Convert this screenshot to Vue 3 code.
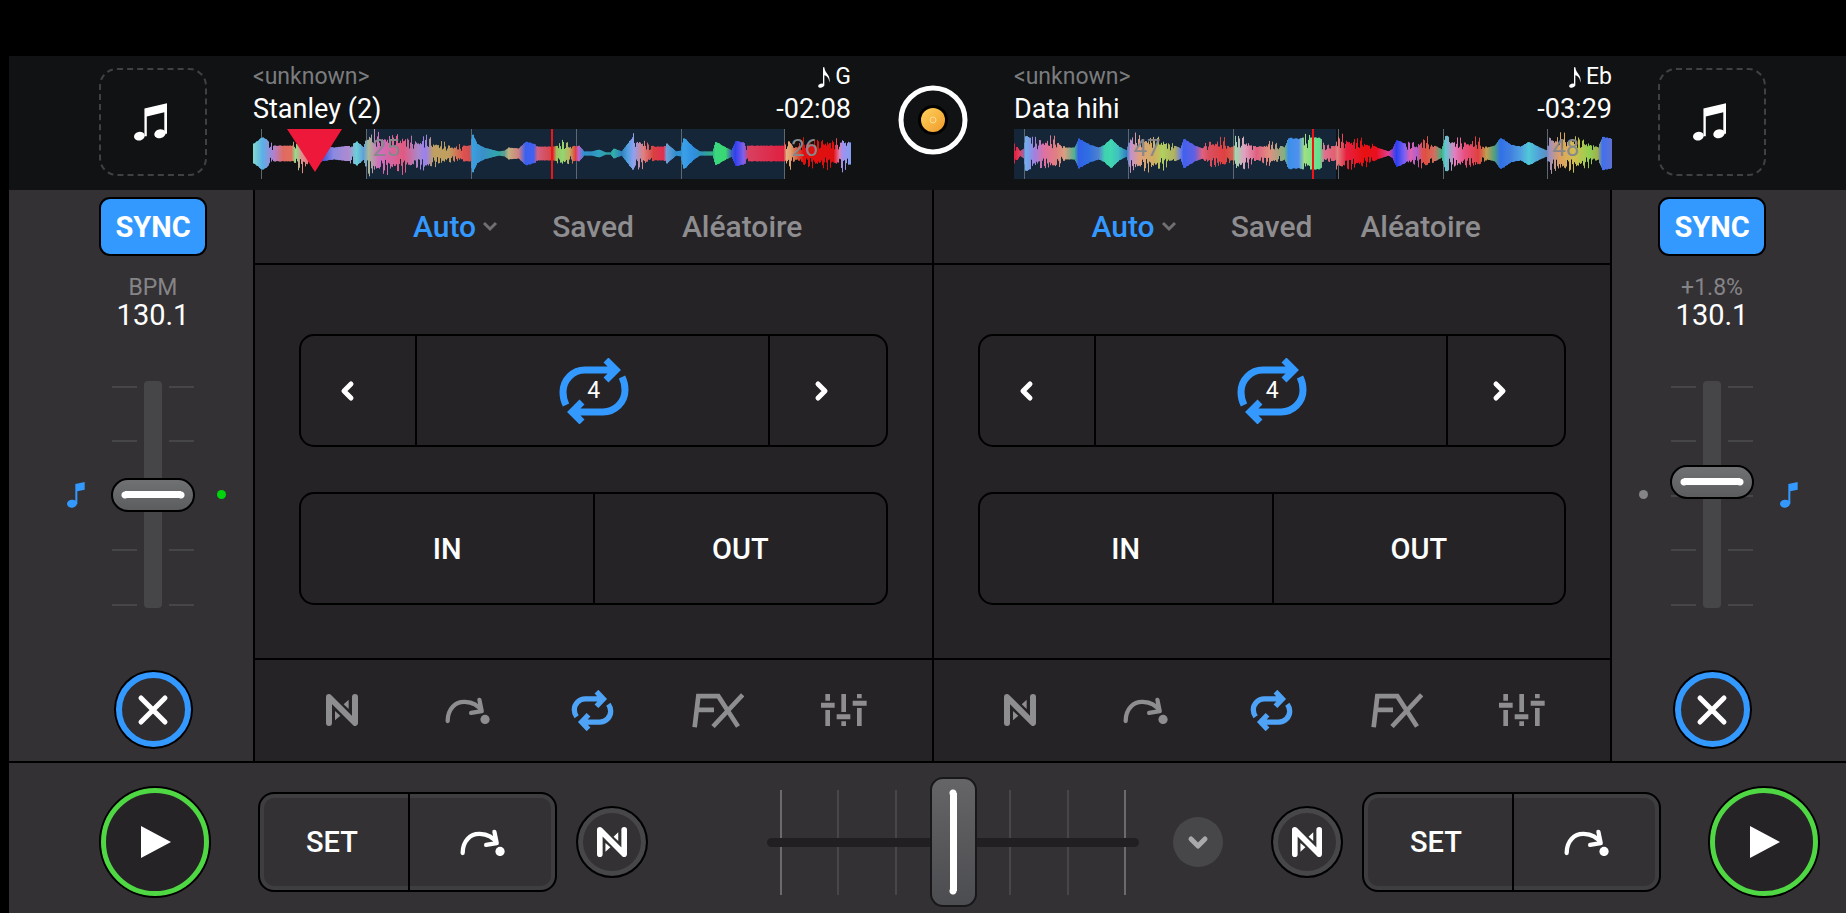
<template>
  <div class="app">
    <svg class="sprite" aria-hidden="true">
      <symbol id="notes" viewBox="0 0 98 112">
        <path d="M31 16 98 0V91H90V27L38 40V98H31Z" />
        <ellipse cx="16" cy="98" rx="16" ry="13" transform="rotate(-14 16 98)" />
        <ellipse cx="77" cy="91" rx="17" ry="13" transform="rotate(-14 77 91)" />
      </symbol>
      <symbol id="note" viewBox="0 0 54 78">
        <path d="M25 6 53 0V23L31 28V66H25Z" />
        <ellipse cx="15" cy="65" rx="15" ry="12" transform="rotate(-8 15 65)" />
      </symbol>
      <symbol id="key" viewBox="0 0 36 64">
        <path d="M15 1H19C20 20 40 24 34 48C34 34 27 27 19 25V57H15Z" />
        <ellipse cx="9" cy="57" rx="9" ry="6" transform="rotate(-18 9 57)" />
      </symbol>
      <symbol id="neural" viewBox="0 0 96 96">
        <path d="M9 87V9L87 87V9" class="line" stroke-width="18" />
        <path d="M68 17V45L53 31ZM27 51V79L43 65Z" />
      </symbol>
      <symbol id="cue" viewBox="0 0 136 80">
        <path d="M8 72C8 34 32 13 60 14C84 15 102 27 110 41M104 8 111 42 79 47" class="line" stroke-width="13" />
        <circle cx="121" cy="67" r="14" />
      </symbol>
      <symbol id="loop" viewBox="0 0 128 124">
        <g class="line butt" stroke-width="16">
          <path d="M16 81C10 73 9 66 9 60A33 33 0 0 1 42 27H94M76 5 97 27 76 49" />
          <path d="M16 81C10 73 9 66 9 60A33 33 0 0 1 42 27H94M76 5 97 27 76 49" transform="rotate(180 64 62)" />
        </g>
      </symbol>
      <symbol id="loop-big" viewBox="0 0 70 66">
        <g class="line butt" stroke-width="7">
          <path d="M7 47C4 41 4 37 4 34A22 22 0 0 1 26 12H57M47 2 57 12 47 22" />
          <path d="M7 47C4 41 4 37 4 34A22 22 0 0 1 26 12H57M47 2 57 12 47 22" transform="rotate(180 35 33)" />
        </g>
      </symbol>
      <symbol id="fx" viewBox="0 0 156 104">
        <path d="M8 102 19 9H79L138 100M16 50H66M152 5 63 100" class="line butt" stroke-width="14" />
      </symbol>
      <symbol id="eq" viewBox="0 0 138 96">
        <path d="M13 0H27V20H13ZM0 26H41V41H0ZM13 48H27V96H13Z" />
        <path d="M61 0H75V54H61ZM47 61H88V76H47ZM61 82H75V96H61Z" />
        <path d="M108 0H122V13H108ZM95 20H137V35H95ZM108 42H122V96H108Z" />
      </symbol>
    </svg>

    <header class="header">
      <div v-for="deck in decks" :key="deck.id" class="track" :class="deck.id">
        <button class="cover" aria-label="Load track">
          <svg width="33" height="38"><use href="#notes" /></svg>
        </button>
        <div class="info">
          <div class="row artist">
            <span>&lt;unknown&gt;</span>
            <span class="key"><svg width="12" height="21"><use href="#key" /></svg>{{ deck.key }}</span>
          </div>
          <div class="row title">
            <span>{{ deck.title }}</span>
            <span>{{ deck.time }}</span>
          </div>
          <div class="wave">
            <svg viewBox="0 0 598 50" preserveAspectRatio="none">
              <rect :x="deck.region[0]" y="0" :width="deck.region[1]" height="50" fill="#142637" />
              <rect v-for="g in deck.grid" :key="g" :x="g" y="0" width="1" height="50" fill="#5d6870" />
              <rect
                v-for="b in deck.bars"
                :key="b.x"
                :x="b.x"
                :y="b.y"
                :width="b.w"
                :height="b.h"
                :fill="b.color"
              />
              <rect x="298" y="0" width="2" height="50" fill="#f01414" />
              <path v-if="deck.cue" d="M34 0H89L62 43Z" fill="#ee183a" />
            </svg>
            <span v-for="m in deck.marks" :key="m.n" class="mark" :style="{ left: m.left }">{{ m.n }}</span>
          </div>
        </div>
      </div>
      <button class="record" aria-label="Library">
        <svg width="70" height="70" viewBox="0 0 70 70">
          <defs>
            <linearGradient id="disc" x1="0" y1="0" x2="1" y2="1">
              <stop offset="0" stop-color="#ffd25a" />
              <stop offset="1" stop-color="#ef9a2c" />
            </linearGradient>
          </defs>
          <circle cx="35" cy="35" r="32" fill="none" stroke="#fff" stroke-width="5" />
          <circle cx="35" cy="35" r="15" fill="#000" />
          <circle cx="35" cy="35" r="12" fill="url(#disc)" />
          <circle cx="35" cy="35" r="3" fill="#f8b64c" stroke="#ffdc8c" />
        </svg>
      </button>
    </header>

    <main class="main">
      <aside v-for="deck in decks" :key="deck.id" class="side" :class="deck.id">
        <button class="sync">SYNC</button>
        <div class="bpm-label">{{ deck.bpmLabel }}</div>
        <div class="bpm">{{ deck.bpm }}</div>
        <div class="pitch">
          <div class="slot outer">
            <svg class="blue" width="18" height="26"><use href="#note" /></svg>
          </div>
          <div class="fader">
            <svg class="ticks" viewBox="0 0 84 227">
              <rect x="33" y="0" width="18" height="227" rx="4" />
              <path d="M1 6H26M58 6H83M1 60H26M58 60H83M1 115H26M58 115H83M1 169H26M58 169H83M1 224H26M58 224H83" />
            </svg>
            <input v-model="deck.pitch" type="range" min="0" max="100" step="0.5" aria-label="Pitch" />
          </div>
          <div class="slot inner">
            <span class="dot"></span>
          </div>
        </div>
        <button class="close" aria-label="Close">
          <svg width="32" height="32" viewBox="0 0 32 32">
            <path d="M4 4 28 28M28 4 4 28" class="line" stroke-width="5" />
          </svg>
        </button>
      </aside>

      <section v-for="deck in decks" :key="deck.id" class="panel" :class="deck.id">
        <nav class="tabs">
          <button class="tab active">
            Auto
            <svg width="22" height="12" viewBox="0 0 22 12">
              <path d="M2 2 8 8 14 2" fill="none" stroke="#6f6e71" stroke-width="3" />
            </svg>
          </button>
          <button class="tab">Saved</button>
          <button class="tab">Aléatoire</button>
        </nav>
        <div class="pads">
          <div class="group loops">
            <button aria-label="Halve loop" @click="halve(deck)">
              <svg width="36" height="22" viewBox="0 0 36 22">
                <path d="M11 4 4 11 11 18" class="line" stroke-width="5" />
              </svg>
            </button>
            <button class="size">
              <svg class="blue" width="70" height="66"><use href="#loop-big" /></svg>
              <span>{{ deck.loop }}</span>
            </button>
            <button aria-label="Double loop" @click="double(deck)">
              <svg width="28" height="22" viewBox="0 0 28 22">
                <path d="M4 4 11 11 4 18" class="line" stroke-width="5" />
              </svg>
            </button>
          </div>
          <div class="group points">
            <button>IN</button>
            <button>OUT</button>
          </div>
        </div>
        <nav class="tools">
          <button
            v-for="tool in tools"
            :key="tool.id"
            :aria-label="tool.label"
            :class="{ active: tool.id === 'loop' }"
          >
            <svg :width="tool.w" :height="tool.h"><use :href="'#' + tool.id" /></svg>
          </button>
        </nav>
      </section>
    </main>

    <footer class="footer">
      <div v-for="deck in decks" :key="deck.id" class="transport" :class="deck.id">
        <button class="play" aria-label="Play">
          <svg width="30" height="32" viewBox="0 0 30 32"><path d="M0 0 30 16 0 32Z" /></svg>
        </button>
        <div class="group cues">
          <button>SET</button>
          <button aria-label="Jump to cue">
            <svg width="45" height="27"><use href="#cue" /></svg>
          </button>
        </div>
        <button class="neural" aria-label="Neural mix">
          <svg width="30" height="30"><use href="#neural" /></svg>
        </button>
      </div>
      <div class="mixer">
        <div class="crossfader">
          <div class="scale">
            <i v-for="n in 7" :key="n"></i>
          </div>
          <div class="rail"></div>
          <input v-model="cross" type="range" min="0" max="100" aria-label="Crossfader" />
        </div>
        <button class="more" aria-label="More">
          <svg width="22" height="16" viewBox="0 0 22 16">
            <path d="M4 5 11 12 18 5" class="line" stroke-width="5" />
          </svg>
        </button>
      </div>
    </footer>
  </div>
</template>

<script setup>
import { ref, reactive } from 'vue'

const cross = ref(50)

const tools = [
  { id: 'neural', label: 'Neural mix', w: 32, h: 32 },
  { id: 'cue', label: 'Hot cues', w: 45, h: 27 },
  { id: 'loop', label: 'Loops', w: 43, h: 41 },
  { id: 'fx', label: 'Effects', w: 52, h: 35 },
  { id: 'eq', label: 'Equalizer', w: 46, h: 32 },
]

// position, half height, colour
const waveA = [
  [0, 10, '#7fd8d0'], [9, 17, '#5ab0e8'], [20, 8, '#b080d0'], [30, 8, '#e06a60'], [38, 8, '#e07060'],
  [42, 14, '#8ee08a'], [48, 18, '#e09090'], [60, 12, '#e06a70'], [68, 8, '#3a50d8'], [80, 6, '#8a8ae0'],
  [95, 8, '#b08ad0'], [103, 12, '#6ad0d8'], [110, 6, '#60a0d8'], [115, 24, '#a8b898'], [125, 20, '#d070c0'],
  [150, 18, '#e05a80'], [165, 14, '#aa88cc'], [172, 19, '#9a80f0'], [180, 13, '#c0a060'], [195, 9, '#c0a060'],
  [210, 8, '#e05050'], [216, 8, '#d05050'], [219, 19, '#3aa0e0'], [223, 10, '#3a98d8'], [230, 6, '#3a90c8'],
  [245, 2, '#30a8a8'], [251, 3, '#60a090'], [255, 6, '#c0b080'], [265, 5, '#d08080'], [272, 12, '#3a60f0'],
  [280, 10, '#4060f0'], [284, 7, '#d06080'], [300, 7, '#d84040'], [303, 8, '#a0c060'], [309, 14, '#90d870'],
  [316, 10, '#c0b060'], [322, 7, '#e04040'], [325, 8, '#c060d0'], [330, 2, '#3090d0'], [338, 2, '#3090c0'],
  [345, 4, '#30a0c0'], [352, 1, '#30a0a8'], [357, 1, '#30a0a8'], [360, 5, '#30b0a8'], [368, 2, '#3080c0'],
  [374, 10, '#50a0e0'], [380, 18, '#90a0f0'], [390, 14, '#e08080'], [400, 7, '#d84040'], [410, 7, '#e03050'],
  [413, 10, '#70a0d8'], [422, 2, '#3090d0'], [427, 3, '#3090d0'], [430, 16, '#3aa0e8'], [440, 6, '#3090e0'],
  [446, 2, '#3090c0'], [459, 2, '#30b080'], [462, 12, '#3ad880'], [472, 6, '#3ad870'], [478, 3, '#4060c0'],
  [482, 13, '#3040f0'], [490, 11, '#8060e8'], [495, 8, '#d84060'], [530, 8, '#e02040'], [533, 14, '#e0b080'],
  [537, 15, '#e0a070'], [543, 5, '#d86040'], [550, 14, '#e01010'], [580, 14, '#e01010'], [586, 12, '#e080b0'],
  [589, 18, '#a090f0'], [598, 10, '#80a0f0'],
]
const waveB = [
  [0, 10, '#e02040'], [5, 2, '#e04060'], [9, 5, '#a060a0'], [11, 18, '#6ab0f0'], [20, 14, '#a080e0'],
  [30, 15, '#e070a0'], [42, 17, '#e08080'], [50, 6, '#d8a080'], [60, 6, '#50b090'], [64, 15, '#3060e8'],
  [75, 9, '#3070e0'], [84, 6, '#5080d0'], [90, 9, '#40d0b0'], [96, 15, '#40d8b0'], [104, 7, '#40c0c0'],
  [112, 3, '#3080c0'], [116, 20, '#c090d0'], [125, 17, '#e0a080'], [140, 17, '#d0b060'], [148, 15, '#b0d060'],
  [160, 8, '#b0b060'], [166, 5, '#7080e0'], [169, 15, '#4060f0'], [180, 8, '#6060e0'], [188, 5, '#e06080'],
  [194, 13, '#d85060'], [210, 15, '#e04040'], [218, 6, '#d06050'], [221, 19, '#a0d8b0'], [230, 16, '#e0a0c0'],
  [242, 6, '#e06080'], [255, 13, '#e09080'], [270, 6, '#80b080'], [274, 16, '#3a90e8'], [284, 15, '#5090f0'],
  [290, 17, '#a0e080'], [305, 16, '#60e090'], [310, 10, '#e07090'], [320, 7, '#e06070'], [323, 19, '#e08080'],
  [332, 16, '#e82040'], [350, 14, '#e81010'], [362, 6, '#e81020'], [374, 2, '#e04090'], [378, 5, '#8040d0'],
  [382, 14, '#2840f0'], [390, 10, '#8060f0'], [396, 13, '#e060b0'], [402, 10, '#b060d0'], [408, 15, '#e05050'],
  [411, 17, '#e05040'], [420, 8, '#d07060'], [427, 4, '#40b080'], [431, 18, '#60c8d0'], [440, 15, '#e080c0'],
  [450, 13, '#e85080'], [464, 15, '#e04040'], [472, 6, '#c0a050'], [480, 8, '#50a080'], [486, 16, '#3070e8'],
  [496, 9, '#4080e0'], [506, 7, '#50a0e0'], [514, 12, '#50c8d8'], [525, 6, '#50a0d8'], [532, 3, '#6090c0'],
  [535, 19, '#a090c0'], [545, 18, '#e0a060'], [560, 18, '#d0c050'], [575, 12, '#90d050'], [583, 6, '#a0b050'],
  [588, 17, '#4070f0'], [598, 15, '#6070d0'],
]

const channel = (hex, i) => parseInt(hex.substr(1 + i * 2, 2), 16)

// warm colours are noisy, blue and green ones are smooth
const buildBars = (points) => {
  const bars = []
  let p = 0
  for (let x = 0; x < 598; x++) {
    while (points[p + 1][0] <= x) p++
    const [x1, a1, c1] = points[p]
    const [x2, a2, c2] = points[p + 1]
    const t = (x - x1) / (x2 - x1)
    const rgb = [0, 1, 2].map((i) => Math.round(channel(c1, i) * (1 - t) + channel(c2, i) * t))
    const base = a1 * (1 - t) + a2 * t
    const noisy = rgb[0] > 135 && base > 8
    const phase = Math.abs(Math.sin(x * 0.85 + Math.sin(x * 0.37)))
    const amp = base * (1 - (noisy ? 0.5 : 0.06) * phase)
    // the two halves of a noisy stretch swing against each other
    const shift = noisy ? Math.sin(x * 1.7) * base * 0.2 : 0
    bars.push({
      x,
      y: 24.5 - amp + shift,
      w: noisy ? 1 : 2,
      h: amp * 2,
      color: `rgb(${rgb.join(',')})`,
    })
  }
  return bars
}

const decks = reactive([
  {
    id: 'a',
    title: 'Stanley (2)',
    time: '-02:08',
    key: 'G',
    bpmLabel: 'BPM',
    bpm: '130.1',
    pitch: 50,
    loop: 4,
    cue: true,
    region: [113, 418],
    grid: [8, 113, 218, 323, 428, 531],
    marks: [{ n: 25, left: '20%' }, { n: 26, left: '90%' }],
    bars: buildBars(waveA),
  },
  {
    id: 'b',
    title: 'Data hihi',
    time: '-03:29',
    key: 'Eb',
    bpmLabel: '+1.8%',
    bpm: '130.1',
    pitch: 56.5,
    loop: 4,
    cue: false,
    region: [0, 322],
    grid: [10, 114, 219, 324, 429, 533],
    marks: [{ n: 47, left: '20%' }, { n: 48, left: '90%' }],
    bars: buildBars(waveB),
  },
])

const halve = (deck) => {
  deck.loop = Math.max(1, deck.loop / 2)
}

const double = (deck) => {
  deck.loop = Math.min(32, deck.loop * 2)
}
</script>

<style>
body {
  margin: 0;
  background: #000;
}
</style>

<style scoped>
.app {
  padding: 56px 0 0 9px;
  font-family: Roboto, sans-serif;
  color: #fff;
}

.app * {
  box-sizing: border-box;
}

.sprite {
  position: absolute;
  width: 0;
  height: 0;
}

svg {
  display: block;
  fill: currentColor;
}

.line {
  fill: none;
  stroke: currentColor;
  stroke-linecap: round;
  stroke-linejoin: round;
}

.butt {
  stroke-linecap: butt;
  stroke-linejoin: miter;
}

button {
  display: flex;
  align-items: center;
  justify-content: center;
  padding: 0;
  border: none;
  background: none;
  color: #fff;
  font: 500 29px/32px Roboto, sans-serif;
  cursor: pointer;
}

input[type='range'] {
  display: block;
  position: relative;
  margin: 0;
  background: none;
  appearance: none;
}

.blue {
  color: #3399ff;
}

/* header */
.header {
  display: flex;
  justify-content: space-between;
  height: 134px;
  padding: 0 80px 0 90px;
  background: #101214;
}

.track {
  display: flex;
  flex: 1;
  gap: 46px;
}

.track.b {
  flex-direction: row-reverse;
  order: 3;
}

.record {
  order: 2;
  width: 163px;
  height: 128px;
}

.cover {
  width: 108px;
  height: 108px;
  margin-top: 12px;
  padding-right: 6px;
  border: 2px dashed #3f4143;
  border-radius: 18px;
}

.info {
  flex: 1;
  padding-top: 5px;
}

.row {
  display: flex;
  justify-content: space-between;
  line-height: 32px;
}

.artist {
  font-size: 23px;
  color: #7b7c7e;
}

.key {
  display: flex;
  align-items: center;
  gap: 5px;
  color: #fff;
}

.title {
  font-size: 27px;
}

.wave {
  position: relative;
  height: 50px;
  margin-top: 4px;
}

.wave svg {
  width: 100%;
  height: 50px;
}

.mark {
  position: absolute;
  top: 5px;
  font-size: 24px;
  line-height: 28px;
  color: #88888c;
}

/* decks */
.main {
  display: grid;
  grid-template-columns: 244px 1fr 1fr 236px;
}

.side {
  display: flex;
  flex-direction: column;
  align-items: center;
  padding: 7px 0 12px 44px;
  background: #333134;
}

.side.b {
  order: 4;
  padding: 7px 34px 12px 0;
  border-left: 2px solid #000;
}

.panel.a {
  order: 2;
}

.panel.b {
  order: 3;
}

.side.a {
  order: 1;
}

.sync {
  width: 108px;
  height: 59px;
  border: 2px solid #000;
  border-radius: 11px;
  background: #3399ff;
  font-weight: 700;
}

.bpm-label {
  margin-top: 19px;
  font-size: 23px;
  line-height: 26px;
  color: #858487;
}

.bpm {
  font-size: 29px;
  line-height: 28px;
}

.pitch {
  display: flex;
  align-items: center;
  margin: 52px 0 62px;
}

.b .pitch {
  flex-direction: row-reverse;
}

.slot {
  display: flex;
  width: 44px;
}

.b .slot {
  justify-content: flex-end;
}

.slot.inner {
  padding: 0 22px;
}

.dot {
  flex: none;
  width: 9px;
  height: 9px;
  border-radius: 50%;
  background: #00d40c;
}

.b .dot {
  background: #858487;
}

.fader {
  position: relative;
  width: 84px;
  height: 227px;
}

.ticks {
  position: absolute;
  width: 84px;
  height: 227px;
  fill: #464547;
}

.ticks path {
  stroke: #464547;
  stroke-width: 2;
}

.fader input {
  width: 84px;
  height: 227px;
  writing-mode: vertical-lr;
  direction: rtl;
}

.fader input::-webkit-slider-runnable-track {
  width: 84px;
  height: 227px;
}

.fader input::-webkit-slider-thumb {
  appearance: none;
  width: 84px;
  height: 34px;
  border: 2px solid #000;
  border-radius: 17px;
  background:
    radial-gradient(circle, #fff 3px, transparent 4px) 8px 11px / 8px 8px no-repeat,
    radial-gradient(circle, #fff 3px, transparent 4px) 64px 11px / 8px 8px no-repeat,
    linear-gradient(#fff, #fff) center / 56px 7px no-repeat,
    linear-gradient(#707173, #5c5d5f);
}

.close {
  width: 75px;
  height: 75px;
  margin: 2px;
  border: 6px solid #3399ff;
  border-radius: 50%;
  box-shadow: 0 0 0 2px #000;
  background: #2f2d30;
}

.panel {
  border-left: 2px solid #000;
  background: #252326;
}

.tabs {
  display: flex;
  justify-content: center;
  gap: 48px;
  height: 75px;
  padding-left: 29px;
  border-bottom: 2px solid #000;
}

.tab {
  color: #8e8d90;
  font-size: 30px;
}

.tab.active {
  gap: 6px;
  color: #3399ff;
}

.pads {
  display: grid;
  gap: 45px;
  padding: 69px 44px 53px;
}

.group {
  display: grid;
  border: 2px solid #000;
  border-radius: 15px;
}

.group button + button {
  border-left: 2px solid #000;
}

.loops,
.points {
  height: 113px;
}

.loops {
  grid-template-columns: 114px 1fr 118px;
}

.points {
  grid-template-columns: 1fr 1fr;
}

.size {
  position: relative;
  padding-left: 3px;
}

.size span {
  position: absolute;
  font-size: 23px;
  font-weight: 400;
}

.tools {
  display: grid;
  grid-template-columns: repeat(5, 1fr);
  height: 102px;
  padding: 0 25px 0 24px;
  border-top: 2px solid #000;
}

.tools button {
  color: #8e8d90;
}

.tools .active {
  color: #4fa3f7;
}

/* transport */
.footer {
  display: flex;
  height: 152px;
  padding: 8px 26px 0 90px;
  border-top: 2px solid #000;
  background: #333134;
}

.transport {
  display: flex;
  align-items: center;
}

.transport.b {
  flex-direction: row-reverse;
  order: 3;
}

.play {
  width: 108px;
  height: 108px;
  margin: 2px 49px 2px 2px;
  border: 5px solid #4fd744;
  border-radius: 50%;
  box-shadow: 0 0 0 2px #000;
  background: #252326;
}

.b .play {
  margin: 2px 2px 2px 49px;
}

.play svg {
  margin-left: 2px;
}

.cues {
  grid-template-columns: 148px 147px;
  height: 100px;
  border-radius: 16px;
  box-shadow: inset 0 0 0 4px #3e3d40;
}

.cues button:first-child {
  padding-right: 4px;
}

.neural {
  width: 72px;
  height: 72px;
  margin: 0 19px;
  border: 2px solid #000;
  border-radius: 50%;
  box-shadow: inset 0 0 0 5px #474649;
}

.a .neural {
  margin-right: 0;
}

.b .neural {
  margin-left: 0;
}

.mixer {
  display: flex;
  flex: 1;
  order: 2;
  align-items: center;
  gap: 34px;
  padding: 0 48px 0 119px;
}

.crossfader {
  position: relative;
  display: grid;
  flex: 1;
  align-items: center;
}

.crossfader > * {
  grid-area: 1 / 1;
}

.scale {
  display: flex;
  justify-content: space-between;
  margin: 0 13px;
}

.scale i {
  width: 2px;
  height: 105px;
  background: #474649;
}

.scale i:first-child,
.scale i:last-child {
  background: #6b6a6d;
}

.rail {
  height: 9px;
  border-radius: 5px;
  background: #211f22;
}

.crossfader input {
  width: 100%;
  height: 130px;
}

.crossfader input::-webkit-slider-runnable-track {
  height: 130px;
}

.crossfader input::-webkit-slider-thumb {
  appearance: none;
  width: 47px;
  height: 130px;
  border: 2px solid #18171a;
  border-radius: 13px;
  background:
    radial-gradient(circle, #fff 3px, transparent 4px) center 10px / 8px 8px no-repeat,
    radial-gradient(circle, #fff 3px, transparent 4px) center 108px / 8px 8px no-repeat,
    linear-gradient(#fff, #fff) center / 7px 98px no-repeat,
    linear-gradient(#656467, #4c4d50);
}

.more {
  width: 50px;
  height: 50px;
  border-radius: 50%;
  background: #474649;
  color: #a9a8ab;
}
</style>
